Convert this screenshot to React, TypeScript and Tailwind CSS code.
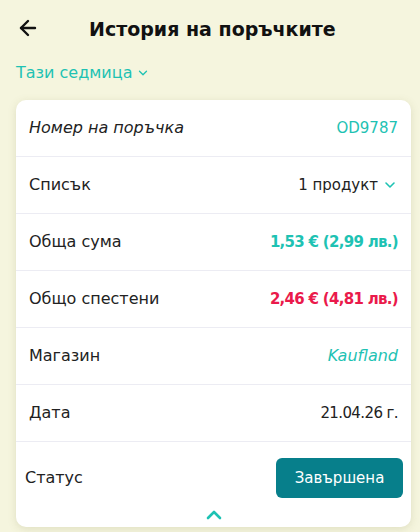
import { ArrowLeft, ChevronDown, ChevronUp } from 'lucide-react'

export default function App() {
  const rows = [
    { label: 'Номер на поръчка', value: 'OD9787', labelClass: 'italic', valueClass: 'text-[#1ec2b3] text-[15px]' },
    { label: 'Списък', value: '1 продукт', valueClass: 'text-[#222] text-[15px]', chevron: true },
    { label: 'Обща сума', value: '1,53 € (2,99 лв.)', valueClass: 'text-[#1ec2b3] font-bold text-[15px] tracking-[-0.7px]' },
    { label: 'Общо спестени', value: '2,46 € (4,81 лв.)', valueClass: 'text-[#ea1a4b] font-bold text-[15px] tracking-[-0.7px]' },
    { label: 'Магазин', value: 'Kaufland', valueClass: 'text-[#1ec2b3] italic text-[16px]' },
    { label: 'Дата', value: '21.04.26 г.', valueClass: 'text-[#222] text-[15px] tracking-[-0.6px]' },
  ]

  return (
    <div className="w-[420px] h-[532px] overflow-hidden bg-[#f5f5de] text-[#222] font-['DejaVu_Sans','Noto_Sans',sans-serif]">
      {/* Header */}
      <div className="h-[56px] flex items-center pl-[16px]">
        <ArrowLeft className="w-6 h-6 text-[#111]" strokeWidth={2.4} />
        <h1 className="ml-[49px] text-[19px] font-bold text-[#111] mt-[2px]">История на поръчките</h1>
      </div>

      {/* Filter */}
      <button className="flex items-center gap-1 ml-4 mt-[5px] text-[16px] text-[#1ec2b3]">
        Тази седмица
        <ChevronDown className="w-3.5 h-3.5" strokeWidth={2.2} />
      </button>

      {/* Card */}
      <div className="ml-4 mt-[15px] w-[395px] bg-white rounded-[10px] shadow-[0_2px_8px_rgba(120,120,60,0.18)]">
        {rows.map((row, i) => (
          <div
            key={i}
            className="h-[57px] flex items-center justify-between pl-[13px] pr-[13px] border-b border-[#ececf3] text-[16px]"
          >
            <span className={row.labelClass}>{row.label}</span>
            <span className={'flex items-center gap-1 ' + row.valueClass}>
              {row.value}
              {row.chevron && <ChevronDown className="w-4 h-4 text-[#1ec2b3]" strokeWidth={2.4} />}
            </span>
          </div>
        ))}

        {/* Status */}
        <div className="flex items-center justify-between pl-[9px] pr-[8px] pt-[16px] text-[16px]">
          <span>Статус</span>
          <span className="h-[40px] w-[127px] rounded-[6px] bg-[#077f8b] text-white text-[15px] flex items-center justify-center">
            Завършена
          </span>
        </div>
        <div className="flex justify-center pt-[5px]">
          <ChevronUp className="w-6 h-6 text-[#1ec2b3]" strokeWidth={2.6} />
        </div>
      </div>
    </div>
  )
}
